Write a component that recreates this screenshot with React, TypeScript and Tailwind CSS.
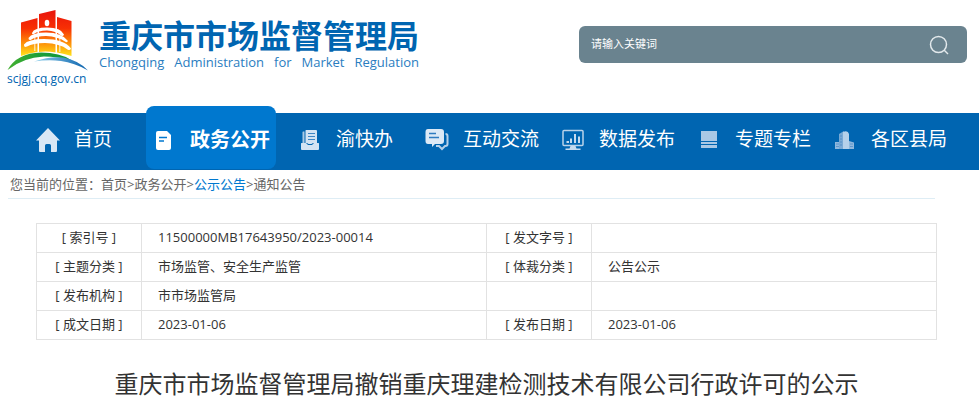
import clsx from "clsx";
import type { ReactNode } from "react";

type NavItem = {
  label: string;
  icon: ReactNode;
  active?: boolean;
  className?: string;
};

const navItems: NavItem[] = [
  { label: "首页", icon: <HomeIcon />, className: "pr-3" },
  { label: "政务公开", icon: <DocumentIcon />, active: true },
  { label: "渝快办", icon: <ServiceIcon />, className: "pr-[10px]" },
  { label: "互动交流", icon: <ChatIcon /> },
  { label: "数据发布", icon: <ChartIcon /> },
  { label: "专题专栏", icon: <TopicIcon /> },
  { label: "各区县局", icon: <BuildingIcon /> },
];

const rows = [
  ["索引号", "11500000MB17643950/2023-00014", "发文字号", ""],
  ["主题分类", "市场监管、安全生产监管", "体裁分类", "公告公示"],
  ["发布机构", "市市场监管局", "", ""],
  ["成文日期", "2023-01-06", "发布日期", "2023-01-06"],
];

function HomeIcon() {
  return (
    <svg width="24" height="24" viewBox="0 0 24 24" fill="#d9e7f5">
      <path d="M12 0 24 12.5h-3V23q0 1-1 1h-5v-6.500q0-1.500-1.500-1.500h-3Q9 16 9 17.500V24H4q-1 0-1-1V12.500H0Z" />
    </svg>
  );
}

function DocumentIcon() {
  return (
    <svg width="24" height="24" viewBox="0 0 24 24">
      <path d="M6 3h9l4 4v13q0 2-2 2H6q-2 0-2-2V5q0-2 2-2Z" fill="#fff" />
      <path d="M7 9.500h8M7 13h5" stroke="#0078cf" strokeWidth="1.500" />
    </svg>
  );
}

function ServiceIcon() {
  return (
    <svg width="24" height="24" viewBox="0 0 24 24" fill="#d3e3f3">
      <path d="M5 3.500h1.500V15H4.500V4Z" opacity=".8" />
      <path d="M8 2h10q1 0 1 1v12h-4l-1.500 1h-3L9 15H7.500V2.500Z" />
      <path d="M3.500 15H8l2 2h4l2-2h4.500q.5 0 .5.500V21q0 1-1 1H4q-1 0-1-1v-5.500q0-.5.500-.5Z" />
      <path d="M10 5.500h7M10 8.500h7M10 11.500h7" stroke="#3f86c4" />
    </svg>
  );
}

function ChatIcon() {
  return (
    <svg width="24" height="24" viewBox="0 0 24 24">
      <path
        d="M20.500 6q2 0 2 2v8q0 2-2 2H20l-3 3-3-3h-3"
        fill="none"
        stroke="#b5d0e9"
        strokeWidth="2"
      />
      <path
        d="M3 1h13q3 0 3 3v9q0 3-3 3h-6l-3 3v-3H3q-2.500 0-2.500-3V4Q.5 1 3 1Z"
        fill="#dce9f6"
      />
      <path d="M4 5.500h7M4 9.500h10" stroke="#2f7bc0" strokeWidth="1.500" />
    </svg>
  );
}

function ChartIcon() {
  return (
    <svg width="24" height="24" viewBox="0 0 24 24" fill="#c6dbef">
      <rect
        x="2"
        y="2.500"
        width="20"
        height="15"
        rx="1"
        fill="none"
        stroke="#b9d3ea"
        strokeWidth="1.500"
      />
      <path d="M5.500 13H8v2H5.500ZM9 10.500h2V15H9ZM13 6h2v9h-2ZM17 8.500h2V15h-2ZM9.500 18h5l1 2.500h4V22h-15v-1.500h4Z" />
    </svg>
  );
}

function TopicIcon() {
  return (
    <svg width="24" height="24" viewBox="0 0 24 24" fill="#a9c8e5">
      <path d="M4 3h16v10H4ZM4 14h16v2H4ZM4 17h16v3H4Z" />
    </svg>
  );
}

function BuildingIcon() {
  return (
    <svg width="24" height="24" viewBox="0 0 24 24">
      <path d="M2 14h5v7H2ZM16 13l5 1.500V21h-5Z" fill="#8fb8dd" />
      <path d="m6 6 5-3v18H6Z" fill="#78a9d5" />
      <path d="M10 4q5-2 6 2v15h-6Z" fill="#b4d0ea" />
      <path
        d="M7 8h2M7 11h2M7 14h2M7 17h2M3 16h3M3 18.500h3M17 16h3M17 18.500h3"
        stroke="#3d82c2"
        strokeWidth=".6"
      />
    </svg>
  );
}

function Emblem() {
  return (
    <svg width="82" height="62" viewBox="7 9 82 62">
      <defs>
        <linearGradient id="towers" x1="0" y1="10" x2="0" y2="56" gradientUnits="userSpaceOnUse">
          <stop offset="0" stopColor="#e8140c" />
          <stop offset=".4" stopColor="#f83004" />
          <stop offset=".7" stopColor="#fd8a08" />
          <stop offset="1" stopColor="#ffe31a" />
        </linearGradient>
        <linearGradient id="hill" x1="0" x2="1">
          <stop offset="0" stopColor="#43b02f" />
          <stop offset=".6" stopColor="#169b3a" />
          <stop offset="1" stopColor="#169b3a" />
        </linearGradient>
        <linearGradient id="river" x1="0" x2="1">
          <stop offset="0" stopColor="#8fd0ec" />
          <stop offset="1" stopColor="#0b62ad" />
        </linearGradient>
      </defs>
      <g fill="url(#towers)">
        <path d="M21 22.500 37.500 18v34Q29 53 21 56Z" />
        <path d="M39 14 55.500 10v42.500Q47 51 39 52Z" />
        <path d="M57 17 71.500 21v35Q64 53.500 57 52.500Z" />
      </g>
      <ellipse cx="47" cy="23" rx="2.300" ry="3.300" fill="#fff" />
      <g fill="#fff">
        <path d="M32 33Q34 27.500 47 27.500 61 27.500 64 34.500 63 37 61 35.500 56 31 47 30.500 38 30.500 34 34 32 35 32 33Z" />
        <path d="M28.500 38Q32 32.500 46 32.500 62 32.500 68 41 67 43 65 41.500 58 36.500 46 36 36 36 31.500 39.500 28.500 41 28.500 38Z" />
        <path d="M24 44.500Q28 39 44 39 64 39 71 48.500 70 51 67.500 49.500 60 43.500 45 43 33 43 27 46.500 23.500 48 24 44.500Z" />
        <path d="M34 35h1.500v16H34ZM59 36h1.500v16H59Z" opacity=".6" />
      </g>
      <path d="M7.500 70Q17 53 41 52.500 60 52.500 71 60 57 56.500 44 56.500 23 57.500 7.500 70Z" fill="url(#hill)" />
      <path d="M34 61.500Q50 56 63 57.500 78 60 88 70.500 74 62.500 61 61 48 59.500 34 61.500Z" fill="url(#river)" />
    </svg>
  );
}

function Header() {
  return (
    <header className="flex items-start justify-between pl-[7px] pr-3 h-[113px]">
      <a href="#" className="flex items-start gap-[10px] text-[#0065b1]">
        <span className="flex flex-col pt-[9px]">
          <Emblem />
          <span className="text-xs leading-4">scjgj.cq.gov.cn</span>
        </span>
        <span className="flex flex-col pt-[18px]">
          <span className="text-[32px] leading-9 font-bold">
            重庆市市场监督管理局
          </span>
          <span className="flex justify-between text-[13px] leading-4 text-[#2a7dbf]">
            <span>Chongqing</span>
            <span>Administration</span>
            <span>for</span>
            <span>Market</span>
            <span>Regulation</span>
          </span>
        </span>
      </a>
      <form className="mt-[26px] flex h-[37px] w-[388px] items-center rounded-md bg-[#6a838f] pl-3 pr-[18px]">
        <input
          type="text"
          aria-label="请输入关键词"
          placeholder="请输入关键词"
          className="min-w-0 flex-1 bg-transparent text-[11px] text-white outline-none placeholder:text-white"
        />
        <button type="button" aria-label="搜索">
          <svg width="20" height="20" viewBox="0 0 20 20" fill="none" stroke="#e3e9ec" strokeWidth="1.500">
            <circle cx="9.500" cy="9.500" r="8" />
            <path d="m15 15 4 4" />
          </svg>
        </button>
      </form>
    </header>
  );
}

function Nav() {
  return (
    <nav className="flex h-[57px] items-end gap-[22px] bg-[#0065b1] pl-9 text-[19px] text-white">
      {navItems.map((item) => (
        <a
          key={item.label}
          href="#"
          className={clsx(
            "flex shrink-0 items-center gap-[14px] whitespace-nowrap",
            item.active
              ? "mb-px h-[63px] rounded-lg bg-[#0078cf] px-[6px] pt-1 text-xl font-bold"
              : "h-[57px] pb-1",
            item.className,
          )}>
          {item.icon}
          <span>{item.label}</span>
        </a>
      ))}
    </nav>
  );
}

export default function App() {
  return (
    <div className="min-h-screen bg-white font-['Open_Sans','Noto_Sans_CJK_SC',sans-serif] text-[13px] text-[#333]">
      <Header />
      <Nav />
      <div className="ml-2 mr-11 border-b border-[#deedf5] pl-[2px] leading-7 text-[#666]">
        您当前的位置：<a href="#">首页</a>&gt;<a href="#">政务公开</a>&gt;
        <a href="#" className="text-[#0078cf]">
          公示公告
        </a>
        &gt;<a href="#">通知公告</a>
      </div>
      <main className="pl-9 pr-[42px] pt-6">
        <table className="w-full table-fixed border-collapse">
          <colgroup>
            <col className="w-[105px]" />
            <col />
            <col className="w-[105px]" />
            <col />
          </colgroup>
          <tbody>
            {rows.map((row) => (
              <tr key={row[0]} className="h-[29px]">
                {row.map((cell, index) =>
                  index % 2 === 0 ? (
                    <th key={index} className="border border-[#e2e2e2] text-center font-normal">
                      {cell && `[ ${cell} ]`}
                    </th>
                  ) : (
                    <td key={index} className="border border-[#e2e2e2] pl-4">
                      {cell}
                    </td>
                  ),
                )}
              </tr>
            ))}
          </tbody>
        </table>
        <h1 className="mt-6 text-center text-2xl leading-10">
          重庆市市场监督管理局撤销重庆理建检测技术有限公司行政许可的公示
        </h1>
      </main>
    </div>
  );
}
